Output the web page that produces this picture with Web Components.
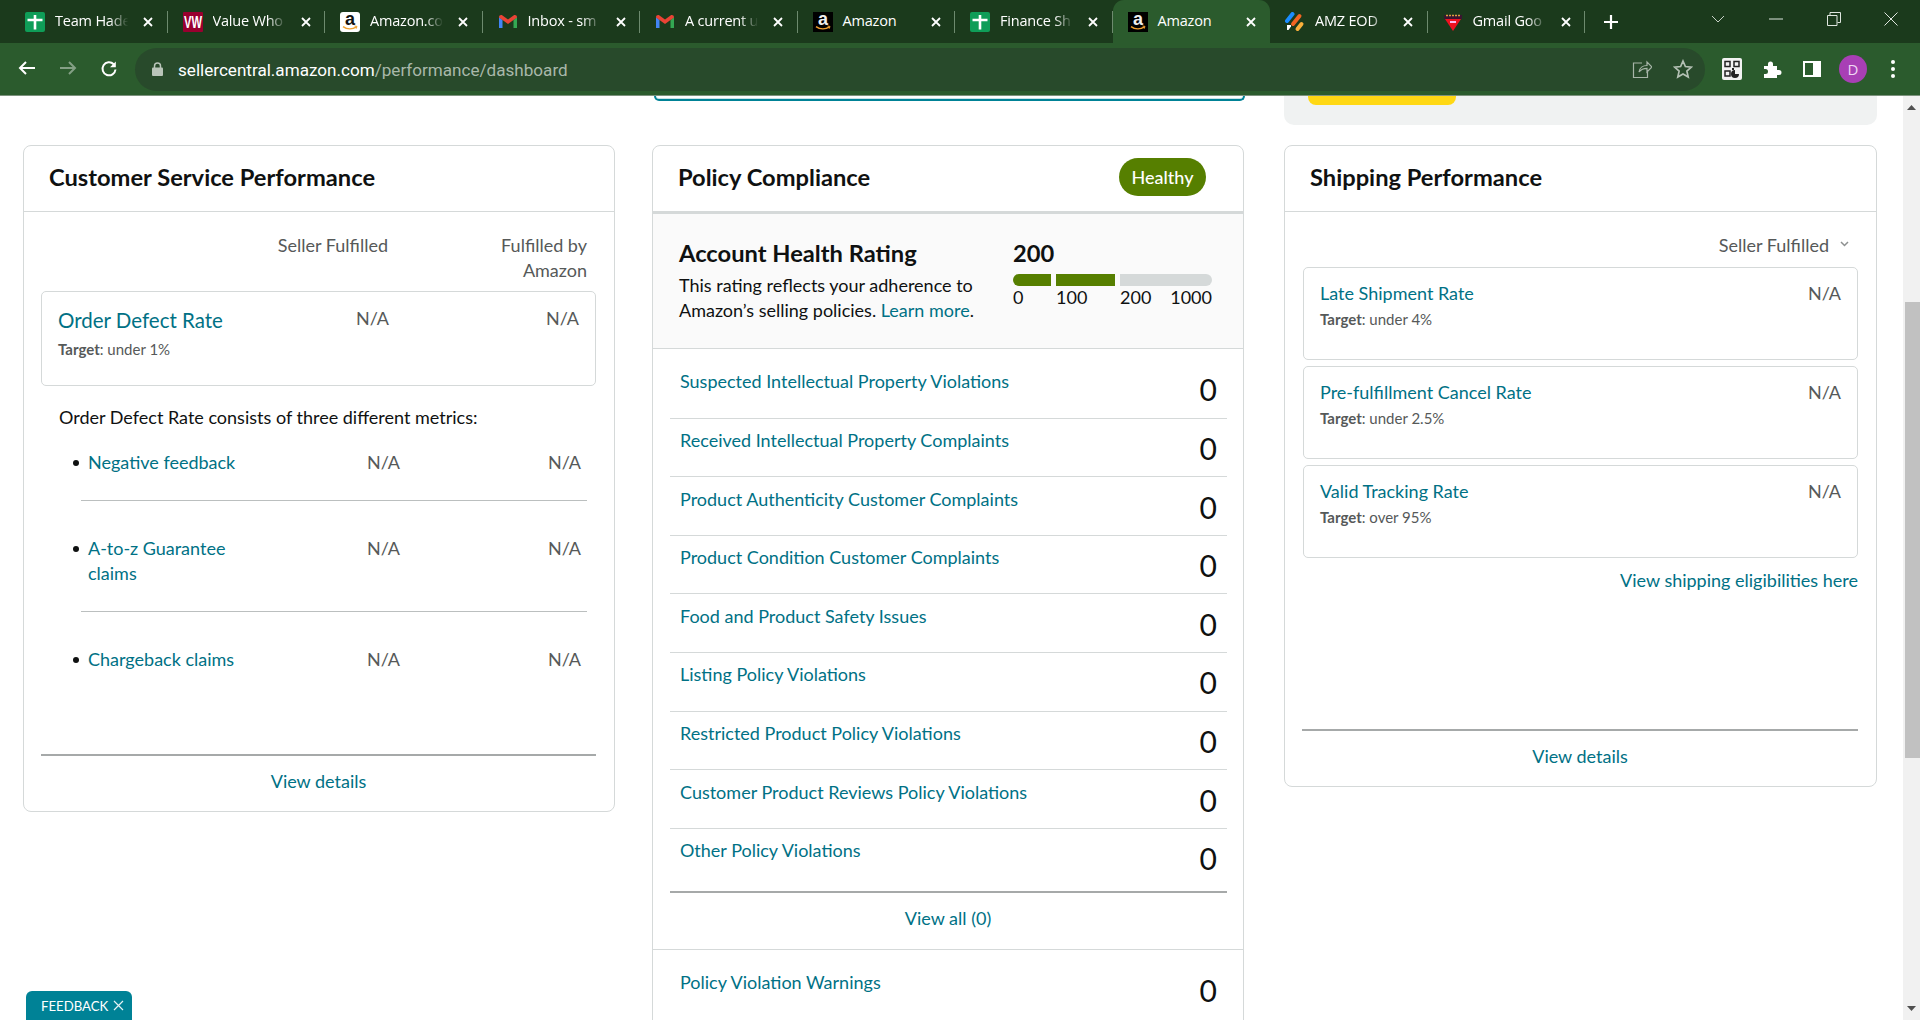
<!doctype html>
<html>
<head>
<meta charset="utf-8">
<title>Account Health</title>
<style>
  html, body { margin: 0; height: 1020px; overflow: hidden; background: #fff; }
  body { font-family: Lato, "Liberation Sans", sans-serif; color: #0f1111; }
</style>
</head>
<body>
<dash-app>
  <browser-chrome>
    <browser-tab icon="sheets">Team Hade</browser-tab>
    <browser-tab icon="ww">Value Who</browser-tab>
    <browser-tab icon="amz">Amazon.co</browser-tab>
    <browser-tab icon="gmail">Inbox - sm</browser-tab>
    <browser-tab icon="gmail">A current u</browser-tab>
    <browser-tab icon="amzdark">Amazon</browser-tab>
    <browser-tab icon="sheets">Finance Sh</browser-tab>
    <browser-tab icon="amzdark" active>Amazon</browser-tab>
    <browser-tab icon="apps">AMZ EOD</browser-tab>
    <browser-tab icon="flag">Gmail Goo</browser-tab>
  </browser-chrome>

  <page-scroller>
    <top-remnants></top-remnants>
    <dash-grid>
      <dash-card heading="Customer Service Performance" min="667">
        <column-heads>
          <span slot="a">Seller Fulfilled</span>
          <span slot="b">Fulfilled by<br>Amazon</span>
        </column-heads>
        <metric-box heading="Order Defect Rate" target="under 1%" big values="N/A,N/A"></metric-box>
        <plain-note>Order Defect Rate consists of three different metrics:</plain-note>
        <sub-metric first>Negative feedback</sub-metric>
        <sub-metric>A-to-z Guarantee<br>claims</sub-metric>
        <sub-metric bare>Chargeback claims</sub-metric>
        <card-footer>View details</card-footer>
      </dash-card>

      <dash-card heading="Policy Compliance" badge="Healthy" thick min="900">
        <health-rating></health-rating>
        <policy-row first>Suspected Intellectual Property Violations</policy-row>
        <policy-row>Received Intellectual Property Complaints</policy-row>
        <policy-row>Product Authenticity Customer Complaints</policy-row>
        <policy-row>Product Condition Customer Complaints</policy-row>
        <policy-row>Food and Product Safety Issues</policy-row>
        <policy-row>Listing Policy Violations</policy-row>
        <policy-row>Restricted Product Policy Violations</policy-row>
        <policy-row>Customer Product Reviews Policy Violations</policy-row>
        <policy-row last>Other Policy Violations</policy-row>
        <view-all>View all (0)</view-all>
        <policy-row first bare>Policy Violation Warnings</policy-row>
      </dash-card>

      <dash-card heading="Shipping Performance" min="642" class="shipping">
        <fulfil-select>Seller Fulfilled</fulfil-select>
        <metric-box heading="Late Shipment Rate" target="under 4%" values="N/A"></metric-box>
        <metric-box heading="Pre-fulfillment Cancel Rate" target="under 2.5%" values="N/A"></metric-box>
        <metric-box heading="Valid Tracking Rate" target="over 95%" values="N/A"></metric-box>
        <right-link>View shipping eligibilities here</right-link>
        <card-footer>View details</card-footer>
      </dash-card>
    </dash-grid>
    <page-scrollbar></page-scrollbar>
    <feedback-tab>FEEDBACK</feedback-tab>
  </page-scroller>
</dash-app>

<script>
const LINK = "#007185", BORDER = "#d5d9d9", GREY = "#565959";

const define = (tag, render) =>
  customElements.define(tag, class extends HTMLElement {
    connectedCallback() {
      if (this.shadowRoot) return;
      const attr = (name) => this.getAttribute(name);
      this.attachShadow({ mode: "open" }).innerHTML = render(attr, this);
    }
  });

const amazonMark = (bg, fg) => `<svg width="20" height="20" viewBox="0 0 20 20" style="overflow:visible">
  <rect width="20" height="20" rx="${bg === "#fff" ? 3 : 0}" fill="${bg}"/>
  <text x="10" y="13" text-anchor="middle" font-family="Liberation Sans" font-weight="700" font-size="18" fill="${fg}">a</text>
  <path d="M3 14.600c4 2.800 9.500 2.800 13.500.3" fill="none" stroke="#f0a030" stroke-width="1.500"/>
  <path d="M14.500 14l2.500.4-.8 2.300" fill="none" stroke="#f0a030" stroke-width="1"/>
</svg>`;

const tabIcons = {
  sheets: `<svg width="20" height="20" viewBox="0 0 20 20"><rect width="20" height="20" rx="2" fill="#0f9d58"/><path d="M8.700 3h2.600v3.700h6.200v2.500h-6.200v8.300H8.700V9.200H2.500V6.700h6.200z" fill="#fff"/></svg>`,
  ww: `<svg width="20" height="20" viewBox="0 0 20 20" style="overflow:visible"><rect width="20" height="20" rx="1" fill="#99002f"/><text x="10" y="16" text-anchor="middle" font-family="Liberation Sans" font-weight="700" font-size="16" textLength="18" lengthAdjust="spacingAndGlyphs" fill="#fff">VW</text></svg>`,
  amz: amazonMark("#fff", "#111"),
  amzdark: amazonMark("#000", "#eee"),
  gmail: `<svg width="20" height="20" viewBox="0 0 20 20"><path d="M1 5v11h3.500V8z" fill="#4285f4"/><path d="M15.500 8v8H19V5z" fill="#34a853"/><path d="M1 5.500 4.500 8 10 12l5.500-4L19 5.500C19 3 17 2.500 15.500 3.500L10 7.500 4.500 3.500C3 2.500 1 3 1 5.500z" fill="#ea4335"/></svg>`,
  apps: `<svg width="20" height="20" viewBox="0 0 20 20"><path d="M2 9 7.500 2" stroke="#1a8cff" stroke-width="4" stroke-linecap="round"/><path d="M8 12 14.500 4" stroke="#f26522" stroke-width="4" stroke-linecap="round"/><path d="M12.500 17 16.500 12" stroke="#fbb03b" stroke-width="4" stroke-linecap="round"/><path d="M2 13h4v1.500l-2.500 3.500H2z" fill="#fff"/></svg>`,
  flag: `<svg width="20" height="20" viewBox="0 0 20 20"><path d="M1 3h18v4H1z" fill="#3a1530"/><path d="M3 3.500h14" stroke="#e0a040" stroke-width="1.500" stroke-dasharray="2 1"/><path d="M2 7h16l-8 12z" fill="#f01020"/><path d="M7 9h6v2H7z" fill="#fbe"/></svg>`
};

define("dash-app", () => `<style>
  :host { display: flex; flex-direction: column; height: 1020px; overflow: hidden; }
</style><slot></slot>`);

define("browser-tab", (attr, el) => {
  const active = el.hasAttribute("active");
  return `<style>
    :host { display: flex; align-items: center; position: relative; box-sizing: border-box; width: 157.5px; height: 43px;
      padding-left: 15px; font: 14.500px "Open Sans", sans-serif; color: #fff; flex: none;
      ${active ? "background: #2b5b2d; border-radius: 11px 11px 0 0;" : ""} }
    .label { width: 78px; margin: -2px 0 0 10px; white-space: nowrap;
      letter-spacing: -.2px; -webkit-mask-image: linear-gradient(90deg, #000 70%, transparent 94%); }
    svg.close { margin-left: 9px; }
    .icon { width: 20px; height: 20px; border-radius: 2px; }
    .sep { position: absolute; right: 0; top: 11px; height: 22px; width: 1px; background: #6d8a6e; }
    :host([active]) .sep { display: none; }
    :host([active]) .label, :host([icon="amzdark"]) .label { -webkit-mask-image: none; }
  </style>
  <span class="icon">${tabIcons[attr("icon")]}</span>
  <span class="label"><slot></slot></span>
  <svg class="close" width="12" height="12" viewBox="0 0 12 12"><path d="M2 2l8 8M10 2l-8 8" stroke="#fff" stroke-width="1.800"/></svg>
  <span class="sep"></span>`;
});

define("browser-chrome", () => `<style>
  :host { display: block; flex: none; height: 96px; }
  .strip { height: 43px; background: #1b3a1c; display: flex; align-items: center; padding-left: 10px; box-sizing: border-box; }
  .plus { flex: none; margin-left: 18px; }
  .controls { margin-left: auto; display: flex; align-items: center; }
  .controls svg { display: block; }
  .bar { height: 52px; border-bottom: 1px solid #7c927d; background: #2b5b2d; display: flex; align-items: center; }
  .nav { display: flex; width: 135px; flex: none; padding-left: 18px; box-sizing: border-box; gap: 23px; }
  .pill { width: 1570px; height: 43px; flex: none; border-radius: 22px; background: #284a2b; display: flex; align-items: center; padding: 0 9px 0 17px; box-sizing: border-box; }
  .url { margin: 2px 0 0 15px; font: 17.100px Roboto, sans-serif; color: #fff; white-space: nowrap; flex: 1; }
  .url span { color: #a9b8aa; }
  .tools { display: flex; align-items: center; margin-left: 17px; }
  .avatar { width: 28px; height: 28px; margin-left: 18px; border-radius: 50%; background: #a83fb5; color: #f0d8f4; display: flex; align-items: center; justify-content: center; font: 15px "Open Sans", sans-serif; }
</style>
<div class="strip">
  <slot></slot>
  <svg class="plus" width="16" height="16" viewBox="0 0 16 16"><path d="M8 1v14M1 8h14" stroke="#fff" stroke-width="2.200"/></svg>
  <div class="controls">
    <svg width="14" height="8" viewBox="0 0 14 8" style="margin-right:44px;margin-top:-6px"><path d="M1 1l6 6 6-6" fill="none" stroke="#c6d0c6" stroke-width="1"/></svg>
    <svg width="14" height="2" viewBox="0 0 14 2" style="margin-right:44px;margin-top:-6px"><path d="M0 1h14" stroke="#dfe6df" stroke-width="1"/></svg>
    <svg width="14" height="14" viewBox="0 0 14 14" style="margin-right:43px;margin-top:-6px"><path d="M.5 3.500h9.500v10H.5z" fill="none" stroke="#dfe6df"/><path d="M3 3.500v-3h10.500v10h-3" fill="none" stroke="#dfe6df"/></svg>
    <svg width="14" height="14" viewBox="0 0 14 14" style="margin-right:22px;margin-top:-6px"><path d="M.5.500l13 13M13.500.500l-13 13" stroke="#dfe6df" stroke-width="1"/></svg>
  </div>
</div>
<div class="bar">
  <div class="nav">
    <svg width="18" height="16" viewBox="0 0 18 16"><path d="M17 8H2M8 2 2 8l6 6" fill="none" stroke="#fff" stroke-width="2"/></svg>
    <svg width="18" height="16" viewBox="0 0 18 16"><path d="M1 8h15M10 2l6 6-6 6" fill="none" stroke="#84a085" stroke-width="2"/></svg>
    <svg width="18" height="18" viewBox="0 0 18 18"><path d="M15.500 9.500a6.500 6.500 0 1 1-1.800-5.200" fill="none" stroke="#fff" stroke-width="2"/><path d="M15.800 1.500v5.800H10z" fill="#fff"/></svg>
  </div>
  <div class="pill">
    <svg width="11" height="14" viewBox="0 0 11 14"><path d="M2.500 6V4a3 3 0 0 1 6 0v2" fill="none" stroke="#b9c4b9" stroke-width="1.500"/><rect y="5.500" width="11" height="8.500" rx="1" fill="#b9c4b9"/></svg>
    <div class="url">sellercentral.amazon.com<span>/performance/dashboard</span></div>
    <svg width="20" height="20" viewBox="0 0 20 20" style="margin-right:21px"><path d="M10 4H1.500v14.500h14V13" fill="none" stroke="#a7b5a8" stroke-width="1.200"/><path d="M7 13c.6-4 4-6.500 8-6.500V3l5 5-5 5V9.300c-3.500 0-6 1-8 3.700z" fill="none" stroke="#a7b5a8" stroke-width="1.200"/></svg>
    <svg width="20" height="20" viewBox="0 0 20 20" style="margin-right:3px"><path d="M10 2l2.400 5.500 6 .6-4.500 4 1.300 5.900L10 15l-5.200 3 1.300-5.900-4.500-4 6-.6z" fill="none" stroke="#b4c0b4" stroke-width="1.700"/></svg>
  </div>
  <div class="tools">
    <svg width="20" height="22" viewBox="0 0 20 22"><rect width="20" height="22" rx="2" fill="#f2f2f2"/><g fill="none" stroke="#222" stroke-width="1.500"><rect x="3" y="3.500" width="5" height="5"/><rect x="12" y="3.500" width="5" height="5"/><rect x="3" y="13" width="5" height="5"/></g><path d="M10 10h2v2h-2zM13 12a4 4 0 1 0 4 4h-4z" fill="#222"/></svg>
    <svg style="margin-left:20px" width="20" height="20" viewBox="0 0 20 20"><path d="M2 7h4V5a2.500 2.500 0 0 1 5 0v2h4v4h2a2.500 2.500 0 0 1 0 5h-2v3H2v-4h1.500a2.500 2.500 0 0 0 0-5H2z" fill="#fff"/></svg>
    <svg style="margin-left:21px" width="18" height="16" viewBox="0 0 18 16"><rect x="1" y="1" width="16" height="14" fill="none" stroke="#fff" stroke-width="2"/><rect x="10" y="1" width="7" height="14" fill="#fff"/></svg>
    <div class="avatar">D</div>
    <svg style="margin-left:24px" width="4" height="18" viewBox="0 0 4 18"><circle cx="2" cy="2" r="2" fill="#fff"/><circle cx="2" cy="9" r="2" fill="#fff"/><circle cx="2" cy="16" r="2" fill="#fff"/></svg>
  </div>
</div>`);

define("page-scroller", () => `<style>
  :host { display: block; position: relative; flex: 1; overflow: hidden; }
</style><slot></slot>`);

define("dash-grid", () => `<style>
  :host { display: grid; grid-template-columns: 592px 592px 596px; column-gap: 37px; padding-left: 23px; align-items: start; }
  ::slotted(.shipping) { margin-left: 3px; }
</style><slot></slot>`);

define("top-remnants", () => `<style>
  :host { display: grid; grid-template-columns: 592px 592px 596px; column-gap: 37px; padding-left: 23px; height: 49px; align-items: start; }
  .teal { grid-column: 2; margin: 0 -1px 0 2px; height: 3px; border: 2px solid #008296; border-top: 0; border-radius: 0 0 6px 6px; background: #fff; box-shadow: inset 0 -1px 0 #c8e4e8; }
  .grey { grid-column: 3; margin-left: 3px; height: 29px; background: #f0f2f2; border-radius: 0 0 10px 10px; padding-left: 24px; }
  .cta { width: 148px; height: 9px; background: #ffd814; border-radius: 0 0 8px 8px; }
</style>
<div class="teal"></div>
<div class="grey"><div class="cta"></div></div>`);

define("dash-card", (attr, el) => {
  const thick = el.hasAttribute("thick");
  return `<style>
  :host { display: flex; flex-direction: column; box-sizing: border-box; border: 1px solid ${BORDER}; border-radius: 8px; background: #fff;
    ${attr("min") ? `min-height: ${attr("min")}px;` : ""} }
  header { height: ${thick ? 68 : 66}px; box-sizing: border-box; display: flex; align-items: center; justify-content: space-between; padding: 0 37px 0 25px;
    border-bottom: ${thick ? 3 : 1}px solid ${BORDER}; flex: none; }
  h2 { margin: -2px 0 0; font: 700 23.700px/1 Lato, sans-serif; color: #0f1111; }
  .badge { background: #567f00; color: #fff; height: 38px; width: 87px; border-radius: 19px; display: flex; align-items: center; justify-content: center; font: 500 18px Lato, sans-serif; margin-top: -4px; }
</style>
<header><h2>${attr("heading")}</h2>${attr("badge") ? `<span class="badge">${attr("badge")}</span>` : ""}</header>
<slot></slot>`;
});

define("column-heads", () => `<style>
  :host { display: grid; grid-template-columns: 364px 199px; padding-top: 21px; height: 58px; color: ${GREY}; font: 18px/25px Lato, sans-serif; text-align: right; }
</style><slot name="a"></slot><slot name="b"></slot>`);

define("metric-box", (attr, el) => {
  const big = el.hasAttribute("big");
  const vals = attr("values").split(",");
  return `<style>
    :host { display: grid; box-sizing: border-box; height: ${big ? 95 : 93}px; margin: ${big ? "0 18px 0 17px" : "0 18px 6px"}; border: 1px solid ${BORDER}; border-radius: 5px;
      padding: ${big ? "16px" : "11px"} 16px 0 16px; grid-template-columns: ${big ? "1fr 190px" : "1fr"}; align-content: start; }
    .head { display: flex; align-items: flex-start; justify-content: space-between; min-width: 0; }
    a { color: ${LINK}; font: ${big ? 20.500 : 18}px/${big ? 25 : 29}px Lato, sans-serif; }
    .na { color: ${GREY}; font: 18px/${big ? 21 : 29}px Lato, sans-serif; text-align: right; }
    .target { color: ${GREY}; font: 15px/20px Lato, sans-serif; margin-top: ${big ? 6 : 1}px; }
    b { font-weight: 700; }
  </style>
  ${big ? `<div>
      <div class="head"><a>${attr("heading")}</a><span class="na">${vals[0]}</span></div>
      <div class="target"><b>Target</b>: ${attr("target")}</div>
    </div><div class="na">${vals[1]}</div>`
  : `<div><div class="head"><a>${attr("heading")}</a><span class="na">${vals[0]}</span></div>
      <div class="target"><b>Target</b>: ${attr("target")}</div></div>`}`;
});

define("plain-note", () => `<style>
  :host { display: block; margin: 19px 0 0 35px; font: 18px/25px Lato, sans-serif; color: #0f1111; }
</style><slot></slot>`);

define("sub-metric", (attr, el) => `<style>
  :host { display: block; margin: 0 27px 0 47px; padding-top: ${el.hasAttribute("first") ? 20 : 35}px; }
  .row { display: grid; grid-template-columns: 17px 165px 147px 181px; font: 18px/25px Lato, sans-serif; }
  .dot { width: 6px; height: 6px; border-radius: 50%; background: #0f1111; margin: 10px 0 0 2px; }
  a { color: ${LINK}; }
  .na { color: ${GREY}; text-align: right; }
  hr { margin: 25px 0 0 10px; border: 0; border-top: 1px solid #bbbfbf; display: ${el.hasAttribute("bare") ? "none" : "block"}; }
</style>
<div class="row"><span class="dot"></span><a><slot></slot></a><span class="na">N/A</span><span class="na">N/A</span></div>
<hr>`);

define("card-footer", () => `<style>
  :host { display: block; margin: auto 18px 0 17px; height: 57px; box-sizing: border-box; border-top: 2px solid #a6a9a9; text-align: center; padding-top: 13px; color: ${LINK}; font: 18px/25px Lato, sans-serif; }
</style><slot></slot>`);

define("health-rating", () => `<style>
  :host { display: flex; height: 135px; box-sizing: border-box; background: #fafafa; border-bottom: 1px solid ${BORDER}; padding: 27px 0 0 26px; }
  .text { width: 334px; flex: none; }
  h3 { margin: 0 0 7px; font: 700 23.700px/25px Lato, sans-serif; }
  p { margin: 0; font: 18px/25px Lato, sans-serif; }
  a { color: ${LINK}; }
  .scale { width: 199px; }
  .score { font: 700 23.700px/25px Lato, sans-serif; }
  .bars { display: flex; gap: 5px; margin-top: 8px; height: 12px; }
  .bars i { display: block; height: 12px; background: #567f00; }
  .bars i:nth-child(1) { width: 38px; border-radius: 6px 0 0 6px; }
  .bars i:nth-child(2) { width: 59px; }
  .bars i:nth-child(3) { width: 92px; background: #d5d9d9; border-radius: 0 6px 6px 0; }
  .labels { display: flex; font: 18px/22px Lato, sans-serif; }
  .labels span:nth-child(1) { width: 43px; }
  .labels span:nth-child(2) { width: 64px; }
  .labels span:nth-child(3) { flex: 1; }
</style>
<div class="text">
  <h3>Account Health Rating</h3>
  <p>This rating reflects your adherence to<br>Amazon’s selling policies. <a>Learn more</a>.</p>
</div>
<div class="scale">
  <div class="score">200</div>
  <div class="bars"><i></i><i></i><i></i></div>
  <div class="labels"><span>0</span><span>100</span><span>200</span><span>1000</span></div>
</div>`);

define("policy-row", (attr, el) => {
  const first = el.hasAttribute("first"), last = el.hasAttribute("last"), bare = el.hasAttribute("bare");
  const height = first ? 69.600 : last ? 64 : 58.600;
  return `<style>
    :host { display: flex; align-items: flex-start; justify-content: space-between; box-sizing: border-box; height: ${height}px; margin: 0 16px 0 17px; padding: ${first ? 20 : 9.500}px 10px 0 10px;
      border-bottom: ${bare ? 0 : last ? "2px solid #a6a9a9" : `1px solid ${BORDER}`}; }
    a { color: ${LINK}; font: 18px/25px Lato, sans-serif; }
    .n { font: 30px/36px Lato, sans-serif; color: #0f1111; margin-top: 2px; }
  </style><a><slot></slot></a><span class="n">0</span>`;
});

define("view-all", () => `<style>
  :host { display: block; height: 57px; box-sizing: border-box; border-bottom: 1px solid ${BORDER}; padding-top: 13px; text-align: center; color: ${LINK}; font: 18px/25px Lato, sans-serif; }
</style><slot></slot>`);

define("fulfil-select", () => `<style>
  :host { display: flex; align-items: center; justify-content: flex-end; height: 55px; padding: 11px 27px 0 0; color: ${GREY}; font: 18px/25px Lato, sans-serif; box-sizing: border-box; }
  svg { margin-left: 11px; margin-top: -2px; }
</style><slot></slot><svg width="9" height="6" viewBox="0 0 9 6"><path d="M1 1l3.500 3.500L8 1" fill="none" stroke="#8d9090" stroke-width="1.500"/></svg>`);

define("right-link", () => `<style>
  :host { display: block; margin: 4px 18px 0 0; text-align: right; color: ${LINK}; font: 18px/25px Lato, sans-serif; }
</style><slot></slot>`);

define("page-scrollbar", () => `<style>
  :host { position: absolute; right: 0; top: 0; bottom: 0; width: 17px; background: #f1f1f1; display: block; }
  .thumb { position: absolute; left: 2px; right: 0; top: 206px; height: 456px; background: #c1c1c1; }
  svg { position: absolute; left: 4px; }
</style>
<svg style="top:9px" width="9" height="5" viewBox="0 0 9 5"><path d="M4.500 0 9 5H0z" fill="#505050"/></svg>
<div class="thumb"></div>
<svg style="bottom:9px" width="9" height="5" viewBox="0 0 9 5"><path d="M4.500 5 9 0H0z" fill="#505050"/></svg>`);

define("feedback-tab", () => `<style>
  :host { position: absolute; left: 26px; bottom: 0; width: 106px; height: 29px; box-sizing: border-box; background: #008296; color: #fff; border-radius: 6px 6px 0 0; padding-left: 15px; display: flex; align-items: center; font: 13.200px Lato, sans-serif; gap: 5px; }
</style><slot></slot><svg width="11" height="11" viewBox="0 0 11 11"><path d="M1 1l9 9M10 1l-9 9" stroke="#e4f2f4" stroke-width="1.200"/></svg>`);
</script>
</body>
</html>
